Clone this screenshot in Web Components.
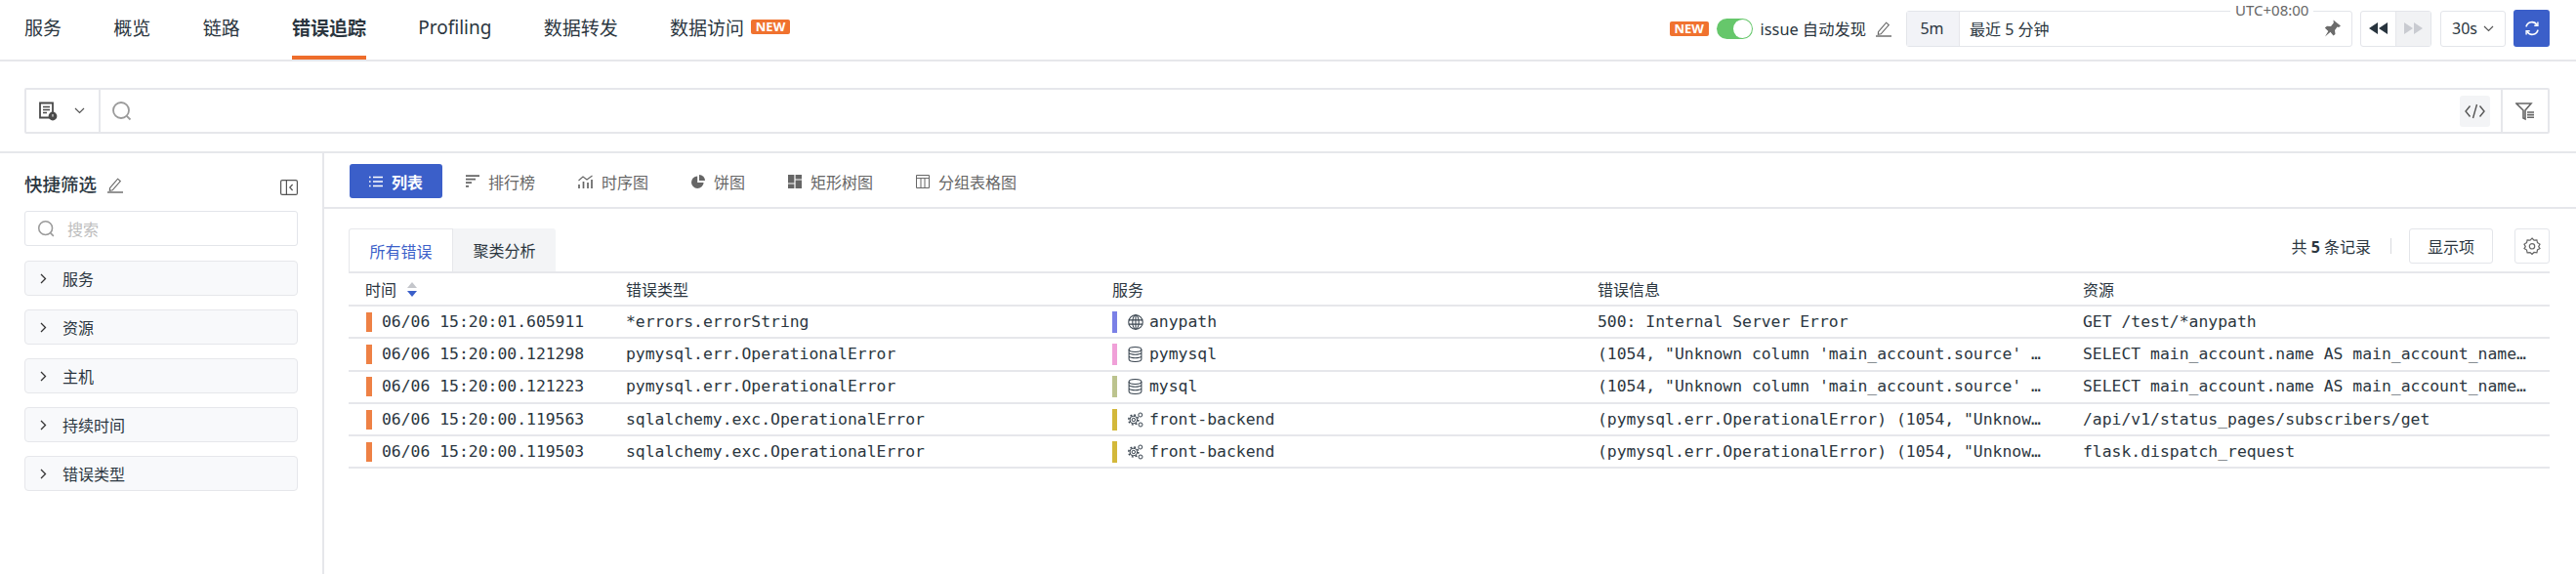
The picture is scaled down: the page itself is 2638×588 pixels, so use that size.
<!DOCTYPE html>
<html lang="zh">
<head>
<meta charset="utf-8">
<title>错误追踪</title>
<style>
  html, body { margin: 0; background: #fff; height: 100%; overflow: hidden; }
  body { font-family: "Noto Sans", "Noto Sans CJK SC", sans-serif; color: #2b3640; }
</style>
</head>
<body>
<app-shell>
  <top-bar slot="top"></top-bar>
  <search-bar slot="search"></search-bar>
  <quick-filter slot="side"></quick-filter>
  <view-tabs slot="main"></view-tabs>
  <error-panel slot="main"></error-panel>
</app-shell>

<script>
const SANS = '"Noto Sans", "Noto Sans CJK SC", sans-serif';
const MONO = '"DejaVu Sans Mono", "Noto Sans CJK SC", monospace';

const icons = {
  pencil: `<svg width="18" height="18" viewBox="0 0 18 18" fill="none" stroke="#666" stroke-width="1.1"><path d="M3.5 12.6 11.6 3.2l2.7 2.3-8.1 9.3-2.9.6z"/><path d="M1 17h16" stroke-width="1.4"/></svg>`,
  search: `<svg width="22" height="22" viewBox="0 0 22 22" fill="none" stroke="#9a9a9a" stroke-width="1.8"><circle cx="10" cy="10" r="8"/><path d="M15.8 15.8 19.500 19.500"/></svg>`,
  chevDown: `<svg width="11" height="7" viewBox="0 0 11 7" fill="none" stroke="#555" stroke-width="1.2"><path d="M1 1l4.5 4.5L10 1"/></svg>`,
  chevRight: `<svg width="7" height="11" viewBox="0 0 7 11" fill="none" stroke="#333" stroke-width="1.3"><path d="M1 1l4.5 4.5L1 10"/></svg>`,
  report: `<svg width="20" height="20" viewBox="0 0 20 20"><path d="M2 1.5h13v15H2z" fill="none" stroke="#4a4a4a" stroke-width="1.8"/><path d="M5 5.5h7M5 8.5h7M5 11.5h4" stroke="#4a4a4a" stroke-width="1.4"/><circle cx="15" cy="15" r="4.4" fill="#4a4a4a"/><path d="M15 13v2.6" stroke="#fff" stroke-width="1"/></svg>`,
  pin: `<svg width="20" height="20" viewBox="0 0 20 20" fill="#6b6b6b"><path d="M11.500 1.500 19 7.500l-2 1.500-1.500-.5-2.500 3.500.5 4-2 1.500-3-3.700L3 18.500l3.300-5.500L2.800 9.500 5 7.800l4 .2 2.800-3.500z"/></svg>`,
  rewind: `<svg width="19" height="12" viewBox="0 0 19 12" fill="#28343e"><path d="M9 0v12L0 6zM19 0v12L10 6z"/></svg>`,
  forward: `<svg width="19" height="12" viewBox="0 0 19 12" fill="#c9cbd1"><path d="M0 0v12l9-6zM10 0v12l9-6z"/></svg>`,
  refresh: `<svg width="16" height="16" viewBox="0 0 16 16" fill="none" stroke="#fff" stroke-width="1.7"><path d="M2 6.4A6 6 0 0 1 13 4.6"/><path d="M14 9.6A6 6 0 0 1 3 11.4"/><path d="M13.9 1.6v3.6h-3.6M2.1 14.4v-3.6h3.6" stroke-width="1.4"/></svg>`,
  code: `<svg width="21" height="16" viewBox="0 0 21 16" fill="none" stroke="#555" stroke-width="1.4"><path d="M5.500 2.500 1 8l4.500 5.500M15.500 2.500 20 8l-4.500 5.500M12.500 1 8.500 15"/></svg>`,
  filter: `<svg width="20" height="20" viewBox="0 0 20 20" fill="none" stroke="#666"><path d="M1 2h15l-6 7v9l-2-1V9z" stroke-width="1.6"/><path d="M12 11h7M12 13.6h7M12 16.2h7" stroke-width="1.6"/></svg>`,
  collapse: `<svg width="18" height="16" viewBox="0 0 18 16" fill="none" stroke="#555" stroke-width="1.2"><rect x=".6" y=".6" width="16.8" height="14.8" rx="1.5"/><path d="M6.4 .6v14.8M12.6 5l-2.8 3 2.8 3"/></svg>`,
  list: `<svg width="14" height="12" viewBox="0 0 14 12" fill="none" stroke="currentColor" stroke-width="1.3"><path d="M0 1.5h1.6M4 1.5h10M0 6h1.6M4 6h10M0 10.5h1.6M4 10.5h10"/></svg>`,
  rank: `<svg width="14" height="14" viewBox="0 0 14 14" fill="none" stroke="currentColor" stroke-width="1.7"><path d="M0 1.2h14M0 4.7h10M0 8.2h6M0 11.9h3"/></svg>`,
  series: `<svg width="15" height="14" viewBox="0 0 15 14" fill="none" stroke="currentColor"><path d="M1 14v-4M5.5 14V7M10 14V8M14 14V5" stroke-width="1.7"/><path d="M.5 6 5 2l4 3 5.5-4" stroke-width="1.1"/></svg>`,
  pie: `<svg width="14" height="14" viewBox="0 0 14 14" fill="currentColor"><path d="M6.2 1.4a6.3 6.3 0 1 0 6.4 6.6H6.2z"/><path d="M8 0a6 6 0 0 1 6 6H8z"/></svg>`,
  tree: `<svg width="14" height="14" viewBox="0 0 14 14" fill="currentColor"><path d="M0 0h6.4v8.4H0zM0 9.6h6.4V14H0zM7.6 0H14v4.4H7.6zM7.6 5.6H14V14H7.6z"/></svg>`,
  grid: `<svg width="14" height="14" viewBox="0 0 14 14" fill="none" stroke="currentColor"><path d="M.5.5h13v13H.5zM.5 3.6h13M5 3.6v9.9M9 3.6v9.9"/></svg>`,
  gear: `<svg width="18" height="18" viewBox="0 0 18 18" fill="none" stroke="#666" stroke-width="1.2"><path d="M9 1l2 2.1 2.9-.3.6 2.8 2.5 1.5L15.7 9.600l1.300 1.900-2.500 1.500-.6 2.800-2.900-.3L9 17.500l-2-1.900-2.900.3-.6-2.800L1 11.500l1.300-1.900L1 7.100l2.500-1.500.6-2.800 2.900.3z"/><circle cx="9" cy="9.300" r="2.700"/></svg>`,
  globe: `<svg width="16" height="16" viewBox="0 0 15 15" fill="none" stroke="#3a4550" stroke-width="1"><circle cx="7.500" cy="7.500" r="6.800"/><ellipse cx="7.500" cy="7.500" rx="3" ry="6.800"/><path d="M.7 5.500h13.600M.7 9.500h13.600M7.500.7v13.600"/></svg>`,
  db: `<svg width="15" height="16" viewBox="0 0 14 15" fill="none" stroke="#3a4550" stroke-width="1"><ellipse cx="7" cy="2.800" rx="6" ry="2.300"/><path d="M1 2.800v9.400c0 1.300 2.700 2.300 6 2.300s6-1 6-2.300V2.800M1 6.200c1 1 3.300 1.500 6 1.500s5-.5 6-1.500M1 9.600c1 1 3.300 1.500 6 1.500s5-.5 6-1.500"/></svg>`,
  svc: `<svg width="16" height="16" viewBox="0 0 16 16" fill="none" stroke="#3a4550" stroke-width="1"><circle cx="5.800" cy="8" r="1.700"/><circle cx="5.800" cy="8" r="3.800"/><circle cx="5.800" cy="8" r="5" stroke-width="1.500" stroke-dasharray="1.900 2"/><circle cx="12.800" cy="3" r="2"/><circle cx="13" cy="13" r="2"/></svg>`
};

class AppShell extends HTMLElement {
  connectedCallback() {
    this.attachShadow({ mode: 'open' });
    this.shadowRoot.innerHTML = `
      <style>
        :host { display: flex; flex-direction: column; width: 2638px; height: 588px; }
        .body { display: flex; flex: 1; min-height: 0; border-top: 2px solid #e6e7eb; }
        aside { width: 332px; flex: none; box-sizing: border-box; border-right: 2px solid #e6e7eb; }
        main { flex: 1; min-width: 0; display: flex; flex-direction: column; }
      </style>
      <slot name="top"></slot>
      <slot name="search"></slot>
      <div class="body">
        <aside><slot name="side"></slot></aside>
        <main><slot name="main"></slot></main>
      </div>
    `;
  }
}

class NewBadge extends HTMLElement {
  connectedCallback() {
    this.attachShadow({ mode: 'open' });
    this.shadowRoot.innerHTML = `
      <style>
        :host {
          display: inline-flex; align-items: center; justify-content: center;
          background: #f0722f; color: #fff; border-radius: 2px;
          width: 40px; height: 15px;
          font: 700 13px/15px ${SANS};
        }
      </style>
      NEW
    `;
  }
}

class TopBar extends HTMLElement {
  connectedCallback() {
    this.attachShadow({ mode: 'open' });
    const nav = ['服务', '概览', '链路', '错误追踪', 'Profiling', '数据转发', '数据访问'];
    this.shadowRoot.innerHTML = `
      <style>
        :host {
          display: flex; justify-content: space-between; align-items: stretch;
          height: 63px; box-sizing: border-box; padding: 0 27px 0 25px;
          border-bottom: 2px solid #e6e7eb;
          font: 19px ${SANS}; color: #2b3640;
        }
        .nav { display: flex; gap: 53.300px; }
        .nav a { display: flex; align-items: center; gap: 7px; height: 61px; box-sizing: border-box; padding-bottom: 6px; position: relative; }
        .nav a.on { font-weight: 700; }
        .nav a.on::after { content: ''; position: absolute; left: 0; right: 0; bottom: 0; height: 4px; background: #ee6d2b; }
        .tools { display: flex; align-items: center; font-size: 16px; padding-bottom: 3px; }
        .toggle { width: 37px; height: 21px; margin: 0 8px; border-radius: 11px; background: #66c76b; position: relative; }
        .toggle::after { content: ''; position: absolute; right: 1px; top: 1px; width: 19px; height: 19px; border-radius: 50%; background: #fff; }
        .issue { font-size: 16.300px; }
        .pen { margin: 0 14px 0 9px; display: flex; }
        .range { width: 457px; height: 37px; box-sizing: border-box; border: 1px solid #e3e5ea; border-radius: 3px; display: flex; align-items: center; position: relative; }
        .range b { font-weight: 400; width: 54px; height: 100%; background: #f2f3f7; display: flex; align-items: center; justify-content: center; border-right: 1px solid #e6e7eb; padding-right: 2px; box-sizing: border-box; }
        .range span { margin-left: 10px; flex: 1; }
        .range svg { margin-right: 10px; }
        .range i { position: absolute; top: -12px; left: 331px; padding: 0 5px; background: #fff; font: normal 15px/20px ${SANS}; color: #666; }
        .step { display: flex; width: 73px; height: 37px; margin-left: 8px; box-sizing: border-box; border: 1px solid #e3e5ea; border-radius: 3px; }
        .step div { flex: 1; display: flex; align-items: center; justify-content: center; }
        .step div + div { background: #f1f2f4; border-left: 1px solid #e6e7eb; }
        .auto { width: 67px; height: 37px; margin-left: 9px; box-sizing: border-box; border: 1px solid #e3e5ea; border-radius: 3px; display: flex; align-items: center; justify-content: center; gap: 6px; }
        .go { width: 37px; height: 38px; margin-left: 8px; background: #3b5fc9; border-radius: 3px; display: flex; align-items: center; justify-content: center; }
      </style>
      <div class="nav">
        ${nav.map(n => `<a class="${n === '错误追踪' ? 'on' : ''}">${n}${n === '数据访问' ? '<new-badge></new-badge>' : ''}</a>`).join('')}
      </div>
      <div class="tools">
        <new-badge></new-badge>
        <div class="toggle"></div>
        <span class="issue">issue 自动发现</span>
        <span class="pen">${icons.pencil}</span>
        <div class="range">
          <b>5m</b><span>最近 5 分钟</span>${icons.pin}<i>UTC+08:00</i>
        </div>
        <div class="step"><div>${icons.rewind}</div><div>${icons.forward}</div></div>
        <div class="auto">30s ${icons.chevDown}</div>
        <div class="go">${icons.refresh}</div>
      </div>
    `;
  }
}

class SearchBar extends HTMLElement {
  connectedCallback() {
    this.attachShadow({ mode: 'open' });
    this.shadowRoot.innerHTML = `
      <style>
        :host { display: block; padding: 27px 27px 18px 25px; }
        .box { height: 47px; box-sizing: border-box; border: 2px solid #e6e7eb; border-radius: 2px; display: flex; align-items: center; }
        .sel { width: 76px; height: 100%; flex: none; box-sizing: border-box; padding-left: 12px; display: flex; align-items: center; gap: 17px; border-right: 2px solid #e6e7eb; }
        .q { flex: 1; padding-left: 11px; display: flex; }
        .code { width: 31px; height: 32px; background: #f3f4f6; border-radius: 3px; display: flex; align-items: center; justify-content: center; margin-right: 11px; }
        .flt { width: 46px; height: 100%; display: flex; align-items: center; justify-content: center; border-left: 2px solid #e6e7eb; }
      </style>
      <div class="box">
        <div class="sel">${icons.report}${icons.chevDown}</div>
        <div class="q">${icons.search}</div>
        <div class="code">${icons.code}</div>
        <div class="flt">${icons.filter}</div>
      </div>
    `;
  }
}

class FilterItem extends HTMLElement {
  connectedCallback() {
    this.attachShadow({ mode: 'open' });
    this.shadowRoot.innerHTML = `
      <style>
        :host {
          display: flex; align-items: center; gap: 16px; height: 36px;
          box-sizing: border-box; padding-left: 15px;
          background: #f8f9fb; border: 1px solid #e6e7eb; border-radius: 4px;
          font: 16px ${SANS}; color: #2b3640;
        }
      </style>
      ${icons.chevRight}<slot></slot>
    `;
  }
}

class QuickFilter extends HTMLElement {
  connectedCallback() {
    this.attachShadow({ mode: 'open' });
    const items = ['服务', '资源', '主机', '持续时间', '错误类型'];
    this.shadowRoot.innerHTML = `
      <style>
        :host { display: flex; flex-direction: column; padding: 18px 25px 0 25px; font-family: ${SANS}; }
        .head { height: 41px; display: flex; align-items: flex-start; justify-content: space-between; }
        .title { display: flex; align-items: center; gap: 10px; font-size: 18.500px; font-weight: 500; line-height: 28px; color: #2b3640; }
        .title svg { display: block; }
        .fold { margin-top: 8px; }
        .input { height: 36px; box-sizing: border-box; border: 1px solid #e3e5ea; border-radius: 3px; display: flex; align-items: center; gap: 12px; padding-left: 12px; font-size: 16px; color: #bdbdbd; margin-bottom: 15px; }
        .input svg { width: 19px; height: 19px; }
        .list { display: flex; flex-direction: column; gap: 14px; }
      </style>
      <div class="head">
        <div class="title">快捷筛选 ${icons.pencil}</div>
        <div class="fold">${icons.collapse}</div>
      </div>
      <div class="input">${icons.search}<span>搜索</span></div>
      <div class="list">${items.map(i => `<filter-item>${i}</filter-item>`).join('')}</div>
    `;
  }
}

class ViewTabs extends HTMLElement {
  connectedCallback() {
    this.attachShadow({ mode: 'open' });
    const tabs = [['list', '列表'], ['rank', '排行榜'], ['series', '时序图'], ['pie', '饼图'], ['tree', '矩形树图'], ['grid', '分组表格图']];
    this.shadowRoot.innerHTML = `
      <style>
        :host {
          display: flex; gap: 4px; height: 57px; box-sizing: border-box;
          padding: 11px 0 0 26px; border-bottom: 2px solid #e6e7eb;
          font: 16px ${SANS}; color: #666;
        }
        div { height: 35px; box-sizing: border-box; padding: 0 20px; display: flex; align-items: center; gap: 9px; border-radius: 3px; }
        div.on { background: #3b5fc9; color: #fff; font-weight: 700; }
      </style>
      ${tabs.map((t, i) => `<div class="${i === 0 ? 'on' : ''}">${icons[t[0]]}<span>${t[1]}</span></div>`).join('')}
    `;
  }
}

class ErrorPanel extends HTMLElement {
  connectedCallback() {
    this.attachShadow({ mode: 'open' });
    const rows = [
      ['06/06 15:20:01.605911', '*errors.errorString', '#7a80e6', 'globe', 'anypath', '500: Internal Server Error', 'GET /test/*anypath'],
      ['06/06 15:20:00.121298', 'pymysql.err.OperationalError', '#f0a0d8', 'db', 'pymysql', `(1054, "Unknown column 'main_account.source' …`, 'SELECT main_account.name AS main_account_name…'],
      ['06/06 15:20:00.121223', 'pymysql.err.OperationalError', '#bcc38e', 'db', 'mysql', `(1054, "Unknown column 'main_account.source' …`, 'SELECT main_account.name AS main_account_name…'],
      ['06/06 15:20:00.119563', 'sqlalchemy.exc.OperationalError', '#d3b83a', 'svc', 'front-backend', `(pymysql.err.OperationalError) (1054, "Unknow…`, '/api/v1/status_pages/subscribers/get'],
      ['06/06 15:20:00.119503', 'sqlalchemy.exc.OperationalError', '#d3b83a', 'svc', 'front-backend', `(pymysql.err.OperationalError) (1054, "Unknow…`, 'flask.dispatch_request']
    ];
    this.shadowRoot.innerHTML = `
      <style>
        :host { display: block; padding: 20px 27px 0 25px; font: 16px ${SANS}; color: #2b3640; }
        .bar { display: flex; align-items: flex-start; height: 44px; }
        .tab { width: 105px; height: 44px; box-sizing: border-box; display: flex; align-items: center; justify-content: center; background: #f3f4f6; border-radius: 0 3px 0 0; }
        .tab.on { width: 107px; background: #fff; color: #3b5fc9; border: 1px solid #e6e7eb; border-bottom: 0; border-radius: 3px 0 0 0; }
        .right { margin-left: auto; display: flex; align-items: center; height: 36px; }
        .count b { font-weight: 700; }
        .sep { width: 1px; height: 16px; background: #d8dade; margin: 0 18px 0 20px; }
        .btn { height: 36px; box-sizing: border-box; border: 1px solid #e3e5ea; border-radius: 3px; display: flex; align-items: center; justify-content: center; }
        .show { width: 86px; }
        .set { width: 36px; margin-left: 22px; }
        .grid { display: grid; grid-template-columns: 267px 498px 497px 497px 1fr; align-items: center; padding-left: 17px; border-bottom: 2px solid #e6e7eb; box-sizing: border-box; }
        .th { height: 36px; border-top: 2px solid #e6e7eb; }
        .th span { display: flex; align-items: center; gap: 11px; }
        .sort { display: flex; flex-direction: column; gap: 3px; }
        .sort i { width: 0; height: 0; border-left: 5px solid transparent; border-right: 5px solid transparent; }
        .sort i:first-child { border-bottom: 6px solid #c4c6cb; }
        .sort i:last-child { border-top: 6px solid #3b5fc9; }
        .tr { height: 33.300px; font: 16.400px/20px ${MONO}; color: #2b3640; }
        .cell { display: flex; align-items: center; min-width: 0; }
        .mark { width: 6px; height: 20px; background: #ee8145; margin: 0 10px 0 1px; flex: none; }
        .smark { width: 5px; height: 22px; margin-right: 11px; flex: none; }
        .ic { width: 16px; margin-right: 6px; display: flex; flex: none; }
      </style>
      <div class="bar">
        <div class="tab on">所有错误</div>
        <div class="tab">聚类分析</div>
        <div class="right">
          <span class="count">共 <b>5</b> 条记录</span>
          <div class="sep"></div>
          <div class="btn show">显示项</div>
          <div class="btn set">${icons.gear}</div>
        </div>
      </div>
      <div class="grid th">
        <span>时间 <div class="sort"><i></i><i></i></div></span>
        <span>错误类型</span><span>服务</span><span>错误信息</span><span>资源</span>
      </div>
      ${rows.map(r => `
        <div class="grid tr">
          <div class="cell"><div class="mark"></div>${r[0]}</div>
          <div class="cell">${r[1]}</div>
          <div class="cell"><div class="smark" style="background:${r[2]}"></div><span class="ic">${icons[r[3]]}</span>${r[4]}</div>
          <div class="cell">${r[5]}</div>
          <div class="cell">${r[6]}</div>
        </div>`).join('')}
    `;
  }
}

customElements.define('new-badge', NewBadge);
customElements.define('filter-item', FilterItem);
customElements.define('top-bar', TopBar);
customElements.define('search-bar', SearchBar);
customElements.define('quick-filter', QuickFilter);
customElements.define('view-tabs', ViewTabs);
customElements.define('error-panel', ErrorPanel);
customElements.define('app-shell', AppShell);
</script>
</body>
</html>
